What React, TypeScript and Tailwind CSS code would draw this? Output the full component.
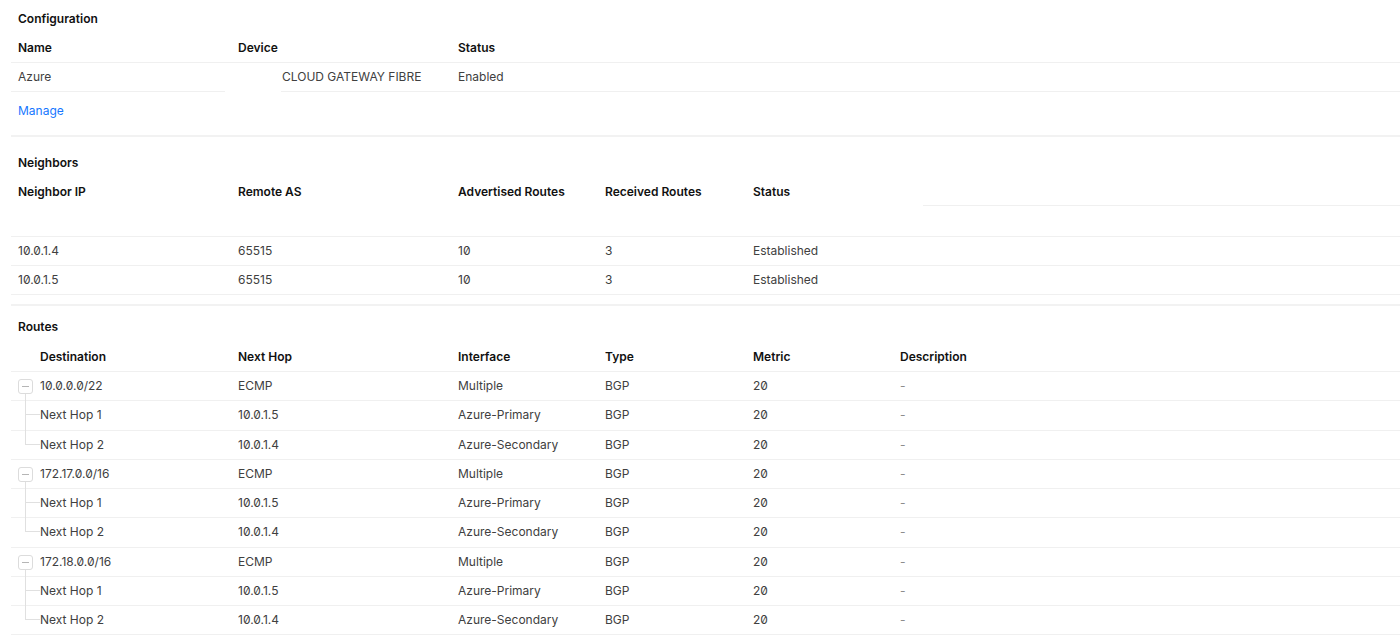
import React from 'react';

const cols = ['w-[220px]', 'w-[220px]', 'w-[147px]', 'w-[148px]', 'w-[147px]'];

const neighbors = [
  { ip: '10.0.1.4', as: '65515', adv: '10', rec: '3', status: 'Established' },
  { ip: '10.0.1.5', as: '65515', adv: '10', rec: '3', status: 'Established' },
];

const routes = [
  { dest: '10.0.0.0/22' },
  { dest: '172.17.0.0/16' },
  { dest: '172.18.0.0/16' },
];

const hops = [
  { name: 'Next Hop 1', ip: '10.0.1.5', iface: 'Azure-Primary' },
  { name: 'Next Hop 2', ip: '10.0.1.4', iface: 'Azure-Secondary' },
];

const num = "[font-feature-settings:'zero']";

function Title({ children, className }: { children: React.ReactNode; className: string }) {
  return <div className={`pl-[7px] font-semibold text-[#111] leading-4 ${className}`}>{children}</div>;
}

function HeadRow({ cells }: { cells: string[] }) {
  return (
    <div className="flex h-[29px] items-center border-b border-[#f0f0f0] font-semibold text-[#111]">
      {cells.map((c, i) => (
        <div key={i} className={`${cols[i] ?? 'flex-1'} pl-[7px]`}>
          {c}
        </div>
      ))}
    </div>
  );
}

function Expander() {
  return (
    <div className="flex w-[15px] flex-col items-center self-stretch">
      <div className="flex-1" />
      <div className="flex h-[15px] w-[15px] items-center justify-center rounded-[3px] border border-[#dcdcdc] bg-white">
        <div className="h-px w-[7px] bg-[#b5b5b5]" />
      </div>
      <div className="-mb-px w-px flex-1 bg-[#e0e0e0]" />
    </div>
  );
}

function Branch({ last }: { last: boolean }) {
  return (
    <div className="flex w-[22px] flex-col self-stretch pl-[7px]">
      <div className="h-1/2 border-b border-l border-[#e0e0e0]" />
      {!last && <div className="-mb-px flex-1 border-l border-[#e0e0e0]" />}
    </div>
  );
}

export default function App() {
  return (
    <div className="min-h-screen bg-white pl-[11px] pt-px font-[Inter,'Noto_Sans',sans-serif] text-[12px] text-[#404040]">
      {/* Configuration */}
      <Title className="h-[33px] pt-[10px]">Configuration</Title>
      <HeadRow cells={['Name', 'Device', 'Status']} />
      <div className="flex h-[29px] items-stretch">
        <div className="flex w-[214px] items-center border-b border-[#f0f0f0] pl-[7px]">Azure</div>
        <div className="w-[56px]" />
        <div className="flex flex-1 items-center border-b border-[#f0f0f0]">
          <div className="w-[177px] pl-[1px]">CLOUD GATEWAY FIBRE</div>
          <div>Enabled</div>
        </div>
      </div>
      <div className="h-[43px] pl-[7px] pt-[11px] leading-4">
        <a href="#" className="text-[#1677ff]">
          Manage
        </a>
      </div>
      <div className="h-[2px] bg-[#f2f2f2]" />

      {/* Neighbors */}
      <Title className="h-[40px] pt-[18px]">Neighbors</Title>
      <div className="flex h-[60px] items-start border-b border-[#f0f0f0] font-semibold text-[#111]">
        {['Neighbor IP', 'Remote AS', 'Advertised Routes', 'Received Routes'].map((c, i) => (
          <div key={c} className={`${cols[i]} flex h-[29px] items-center pl-[7px]`}>
            {c}
          </div>
        ))}
        <div className="flex h-[29px] w-[177px] items-center pl-[7px]">Status</div>
        <div className="h-[29px] flex-1 border-b border-[#f0f0f0]" />
      </div>
      {neighbors.map((n) => (
        <div key={n.ip} className="flex h-[29px] items-center border-b border-[#f0f0f0]">
          <div className={`${cols[0]} pl-[7px] ${num}`}>{n.ip}</div>
          <div className={`${cols[1]} pl-[7px]`}>{n.as}</div>
          <div className={`${cols[2]} pl-[7px] ${num}`}>{n.adv}</div>
          <div className={`${cols[3]} pl-[7px]`}>{n.rec}</div>
          <div className="flex-1 pl-[7px]">{n.status}</div>
        </div>
      ))}
      <div className="h-[9px]" />
      <div className="h-[2px] bg-[#f2f2f2]" />

      {/* Routes */}
      <Title className="h-[37px] pt-[13px]">Routes</Title>
      <div className="flex h-[29px] items-center border-b border-[#f0f0f0] font-semibold text-[#111]">
        <div className={`${cols[0]} pl-[29px]`}>Destination</div>
        {['Next Hop', 'Interface', 'Type', 'Metric'].map((c, i) => (
          <div key={c} className={`${cols[i + 1]} pl-[7px]`}>
            {c}
          </div>
        ))}
        <div className="flex-1 pl-[7px]">Description</div>
      </div>
      {routes.map((r) => (
        <React.Fragment key={r.dest}>
          <div className="flex h-[29.25px] items-stretch border-b border-[#f0f0f0]">
            <div className={`${cols[0]} flex items-center gap-[7px] pl-[7px]`}>
              <Expander />
              <span className={num}>{r.dest}</span>
            </div>
            <div className={`${cols[1]} flex items-center pl-[7px]`}>ECMP</div>
            <div className={`${cols[2]} flex items-center pl-[7px]`}>Multiple</div>
            <div className={`${cols[3]} flex items-center pl-[7px]`}>BGP</div>
            <div className={`${cols[4]} flex items-center pl-[7px] ${num}`}>20</div>
            <div className="flex flex-1 items-center pl-[7px] text-[#8c8c8c]">-</div>
          </div>
          {hops.map((h, i) => (
            <div key={h.name} className="flex h-[29.25px] items-stretch border-b border-[#f0f0f0]">
              <div className={`${cols[0]} flex items-center pl-[7px]`}>
                <Branch last={i === hops.length - 1} />
                <span>{h.name}</span>
              </div>
              <div className={`${cols[1]} flex items-center pl-[7px] ${num}`}>{h.ip}</div>
              <div className={`${cols[2]} flex items-center pl-[7px]`}>{h.iface}</div>
              <div className={`${cols[3]} flex items-center pl-[7px]`}>BGP</div>
              <div className={`${cols[4]} flex items-center pl-[7px] ${num}`}>20</div>
              <div className="flex flex-1 items-center pl-[7px] text-[#8c8c8c]">-</div>
            </div>
          ))}
        </React.Fragment>
      ))}
    </div>
  );
}
